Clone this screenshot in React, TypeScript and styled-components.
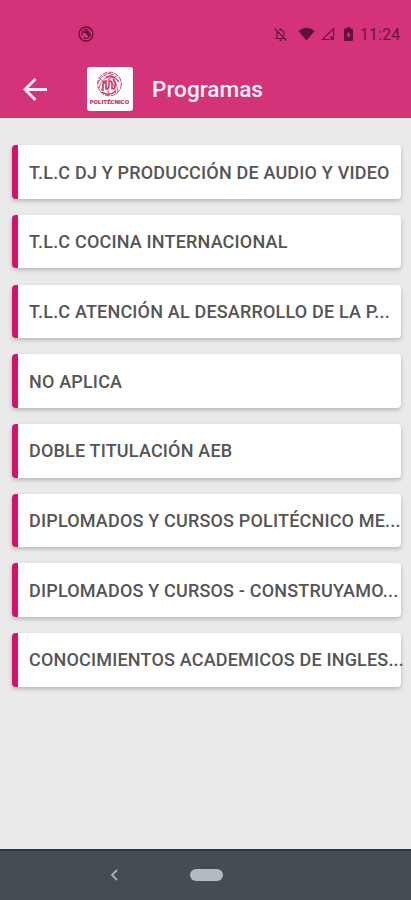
import React from 'react';
import styled, { createGlobalStyle } from 'styled-components';

const GlobalStyle = createGlobalStyle`
  * { box-sizing: border-box; }
  body { margin: 0; background: #eaeaea; font-family: Roboto, "Liberation Sans", sans-serif; }
`;

const Screen = styled.div`
  width: 411px;
  height: 900px;
  display: flex;
  flex-direction: column;
  overflow: hidden;
  background: #eaeaea;
`;

const Header = styled.header`
  height: 118px;
  flex: none;
  background: #d43379;
`;

const StatusBar = styled.div`
  height: 60px;
  padding: 8px 10px 0 78px;
  display: flex;
  align-items: center;
  color: #5f1239;
`;

const StatusIcons = styled.div`
  margin-left: auto;
  display: flex;
  align-items: center;
`;

const StatusIcon = styled.svg<{ $gap?: number }>`
  display: block;
  flex: none;
  margin-right: ${(p) => p.$gap ?? 0}px;
`;

const Clock = styled.span`
  width: 41px;
  padding-top: 2px;
  font-size: 15.8px;
  line-height: 20px;
  letter-spacing: 0.2px;
  white-space: nowrap;
  color: #68143f;
`;

const AppBar = styled.div`
  height: 58px;
  padding-left: 22px;
  display: flex;
  align-items: center;
`;

const BackButton = styled.button`
  width: 26px;
  height: 26px;
  padding: 0;
  border: 0;
  background: none;
`;

const Logo = styled.div`
  width: 46px;
  height: 43.5px;
  margin: 0 19.5px 0 38.5px;
  padding-top: 4px;
  display: flex;
  flex-direction: column;
  align-items: center;
  border-radius: 3px;
  background: #fff;
`;

const LogoName = styled.span`
  margin-top: 1px;
  font-size: 6px;
  line-height: 7px;
  font-weight: 900;
  letter-spacing: 0.1px;
  color: #c22450;
`;

const Title = styled.h1`
  margin: 0;
  padding-top: 2px;
  font-size: 22.6px;
  line-height: 28px;
  font-weight: 500;
  color: #fff0f8;
`;

const List = styled.main`
  flex: 1;
  padding: 27.3px 10px 0 12px;
  display: flex;
  flex-direction: column;
  gap: 16.2px;
`;

const Card = styled.div`
  height: 53.5px;
  flex: none;
  display: flex;
  align-items: center;
  padding: 1px 0 0 11px;
  border-left: 6.5px solid #d3126c;
  border-radius: 4px;
  background: #fff;
  box-shadow: 0 2px 4px rgba(0, 0, 0, 0.22);
`;

const CardLabel = styled.span`
  font-size: 18px;
  line-height: 24px;
  font-weight: 500;
  letter-spacing: 0.18px;
  white-space: nowrap;
  color: #555;
`;

const NavBar = styled.nav`
  height: 51px;
  flex: none;
  padding: 0 0 2px 109px;
  display: flex;
  align-items: center;
  border-top: 2px solid #2b3a3e;
  background: #464d52;
`;

const HomePill = styled.div`
  width: 32.5px;
  height: 12px;
  margin-left: 71px;
  border-radius: 6px;
  background: #b5babe;
`;

const programs = [
  'T.L.C DJ Y PRODUCCIÓN DE AUDIO Y VIDEO',
  'T.L.C COCINA INTERNACIONAL',
  'T.L.C ATENCIÓN AL DESARROLLO DE LA P...',
  'NO APLICA',
  'DOBLE TITULACIÓN AEB',
  'DIPLOMADOS Y CURSOS POLITÉCNICO ME...',
  'DIPLOMADOS Y CURSOS - CONSTRUYAMO...',
  'CONOCIMIENTOS ACADEMICOS DE INGLES...',
];

export default function App() {
  return (
    <Screen>
      <GlobalStyle />
      <Header>
        <StatusBar>
          <StatusIcon width="16" height="16" viewBox="0 0 16 16" fill="none" stroke="currentColor">
            <circle cx="8" cy="8" r="7" strokeWidth="1.4" />
            <path d="M4 9.500A4.300 4.300 0 0 1 10.500 4.500M12 6.500A4.300 4.300 0 0 1 5.500 11.500" strokeWidth="1.100" />
            <path d="M5.500 6.500L8 6l3.500 4.500M8 6l1.800-.4.700 2.400" strokeWidth="1.700" />
          </StatusIcon>
          <StatusIcons>
            <StatusIcon $gap={10} width="15" height="15" viewBox="0 0 15 15" fill="none" stroke="currentColor" strokeWidth="1.1">
              <path d="M1.500 1.500l12 12M2.500 11.500h9M4 11V6.500q0-1.200.6-2M6 3.200q1.500-1 3 0Q11 4.200 11 6.500V9" />
              <path d="M7.500 1.200v1.500M6.500 13.200h2" strokeWidth="1.500" />
            </StatusIcon>
            <StatusIcon $gap={6} width="17" height="14" viewBox="0 0 17 14" fill="currentColor">
              <path d="M.4 4Q8.500-2.600 16.600 4L8.500 13.600z" />
            </StatusIcon>
            <StatusIcon $gap={9} width="14" height="14" viewBox="0 0 14 14" fill="none" stroke="currentColor" strokeWidth="1.100">
              <path d="M8.500 12.500H1.200L12.700 1.500V8.500" />
              <path d="M9.500 9.500l3.500 3.500M13 9.500l-3.500 3.500" />
            </StatusIcon>
            <StatusIcon $gap={7} width="9" height="14" viewBox="0 0 9 14">
              <path fill="currentColor" d="M3 0h3v1.500h2q1 0 1 1V13q0 1-1 1H1q-1 0-1-1V2.500q0-1 1-1h2z" />
              <path fill="#d43379" d="M5 4.200L2.300 8.500h1.800v3l2.700-4.400H5z" />
            </StatusIcon>
            <Clock>11:24</Clock>
          </StatusIcons>
        </StatusBar>
        <AppBar>
          <BackButton aria-label="Volver">
            <svg width="26" height="26" viewBox="0 0 26 26" fill="none" stroke="#ffeef7" strokeWidth="2.800">
              <path d="M25 13.500H3M13.500 3L3 13.500 13.500 24" />
            </svg>
          </BackButton>
          <Logo>
            <svg width="27" height="26" viewBox="0 0 27 26" fill="none" stroke="#cc3560">
              <circle cx="13.500" cy="13" r="11.800" strokeWidth="1" strokeDasharray="5 1" />
              <path d="M2 12Q6 3 15 2M3 17Q5 7 18 3M5 20Q8 7 21 5M14 2Q20 8 22 21M8 4Q18 8 20 23M4 8Q11 11 13 24" strokeWidth="0.800" />
              <path d="M7 20V13q0-3 3-3v8q3 0 3-3v-5q3 0 3 3v5q4 0 3-6l-2-4" strokeWidth="1.500" />
              <path d="M6 21q7 5 14-1M10 7q7-4 13 4" strokeWidth="1.300" />
            </svg>
            <LogoName>POLITÉCNICO</LogoName>
          </Logo>
          <Title>Programas</Title>
        </AppBar>
      </Header>
      <List>
        {programs.map((program) => (
          <Card key={program}>
            <CardLabel>{program}</CardLabel>
          </Card>
        ))}
      </List>
      <NavBar>
        <StatusIcon width="10" height="14" viewBox="0 0 10 14" fill="none" stroke="#abb1b4" strokeWidth="1.800">
          <path d="M8 2L3 7l5 5" />
        </StatusIcon>
        <HomePill />
      </NavBar>
    </Screen>
  );
}
